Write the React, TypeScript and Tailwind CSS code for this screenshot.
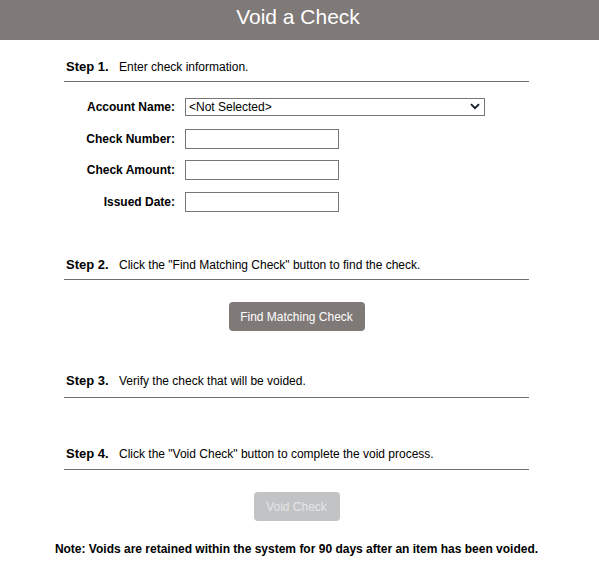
import { useState } from "react";

function StepHeader({ num, text, pb = "pb-[6px]" }: { num: number; text: string; pb?: string }) {
  return (
    <div className={`border-b border-[#6e6e6e] ${pb} pl-[2px] flex items-center text-[12px] leading-[16px] text-black`}>
      <span className="font-bold text-[13px] w-[53px]">Step {num}.</span>
      <span>{text}</span>
    </div>
  );
}

function Field({ label, className = "" }: { label: string; className?: string }) {
  return (
    <div className={`flex items-center ${className}`}>
      <label className="w-[111px] text-right font-bold text-[12px] leading-[16px]">{label}</label>
      <input
        type="text"
        className="block ml-[10px] w-[154px] h-[20px] border border-[#767676] bg-white px-1 text-[12px] outline-none"
      />
    </div>
  );
}

export default function App() {
  const [account, setAccount] = useState("");

  return (
    <div className="w-[599px] h-[574px] bg-white font-['Liberation_Sans',Arial,sans-serif] text-black">
      <header className="h-[40px] bg-[#7f7978] flex justify-center pt-[5px] pr-[3px]">
        <h1 className="text-[21px] leading-[24px] text-white">Void a Check</h1>
      </header>

      <main className="ml-[64px] w-[465px]">
        <div className="pt-[19px]">
          <StepHeader num={1} text="Enter check information." />
        </div>

        <div className="flex items-center mt-[16px] h-[18px]">
          <label className="w-[111px] text-right font-bold text-[12px] leading-[16px]">Account Name:</label>
          <div className="relative ml-[10px] h-[18px]">
            <select
              value={account}
              onChange={(e) => setAccount(e.target.value)}
              className="block appearance-none w-[300px] h-[18px] border border-[#767676] bg-white pl-[3px] py-0 text-[12px] leading-[14px] outline-none"
            >
              <option value="">&lt;Not Selected&gt;</option>
            </select>
            <svg
              className="absolute right-[5px] top-[5px] pointer-events-none"
              width="10"
              height="7"
              viewBox="0 0 10 7"
              fill="none"
            >
              <path d="M1 1.2l4 4 4-4" stroke="#111827" strokeWidth="1.8" />
            </svg>
          </div>
        </div>

        <Field label="Check Number:" className="mt-[13px]" />
        <Field label="Check Amount:" className="mt-[11px]" />
        <Field label="Issued Date:" className="mt-[12px]" />

        <div className="mt-[45px]">
          <StepHeader num={2} text={'Click the "Find Matching Check" button to find the check.'} />
        </div>
        <div className="flex justify-center mt-[22px]">
          <button className="w-[136px] h-[29px] rounded-[4px] bg-[#7f7978] text-white text-[12px]">
            Find Matching Check
          </button>
        </div>

        <div className="mt-[42px]">
          <StepHeader num={3} text="Verify the check that will be voided." pb="pb-[8px]" />
        </div>

        <div className="mt-[48px]">
          <StepHeader num={4} text={'Click the "Void Check" button to complete the void process.'} pb="pb-[7px]" />
        </div>
        <div className="flex justify-center mt-[22px]">
          <button disabled className="w-[86px] h-[29px] rounded-[4px] bg-[#c1c3c5] text-[#e4e6e8] text-[12px]">
            Void Check
          </button>
        </div>

        <div className="flex justify-center mt-[20px]">
          <p className="whitespace-nowrap font-bold text-[12px] leading-[16px]">
            Note: Voids are retained within the system for 90 days after an item has been voided.
          </p>
        </div>
      </main>
    </div>
  );
}
